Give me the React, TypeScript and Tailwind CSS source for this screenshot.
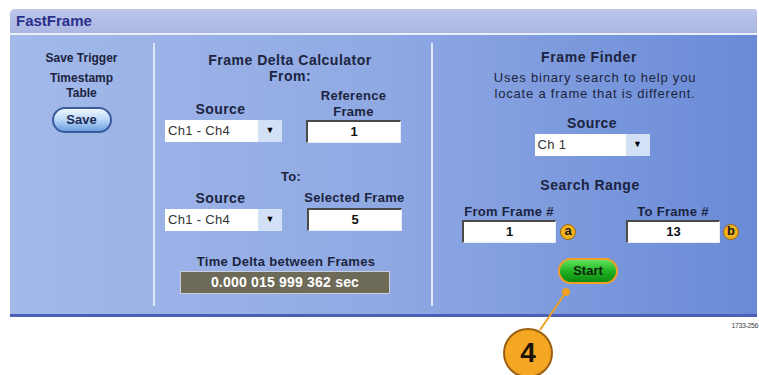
import React from "react";

const label = "font-bold text-[13px] leading-[16px] text-[#1c2440] tracking-[0.3px]";

const Dropdown = ({ value, w }: { value: string; w: string }) => (
  <div className={`flex h-[22px] ${w}`}>
    <div className="flex-1 bg-white flex items-center pl-[3px] text-[13px] text-[#333] tracking-[0.3px]">
      {value}
    </div>
    <div className="w-[24px] bg-[#d3e1f6] flex items-center justify-center text-[9px] text-black">
      ▼
    </div>
  </div>
);

const NumField = ({ value, w = "w-[95px]" }: { value: string; w?: string }) => (
  <div
    className={`h-[23px] ${w} bg-white border-t-2 border-l-2 border-[#4a4a4a] border-r border-b border-r-[#e8eef8] border-b-[#e8eef8] flex items-center justify-center font-bold text-[13px] text-[#111]`}
  >
    {value}
  </div>
);

const Badge = ({ ch }: { ch: string }) => (
  <div className="w-[16px] h-[16px] rounded-full bg-[#f2b21c] border border-[#9a6a10] flex items-center justify-center font-bold text-[13px] leading-none text-[#1a1a1a] pb-[2px]">
    {ch}
  </div>
);

const Divider = () => <div className="w-[2px] my-[8px] bg-[#dce7f8]" />;

const App = () => (
  <div className="relative w-[759px] h-[375px] bg-white overflow-hidden font-['Liberation_Sans',Arial,sans-serif]">
    {/* Panel */}
    <div className="ml-[10px] mt-[9px] w-[747px] rounded-tl-[5px] rounded-tr-[3px] overflow-hidden">
      {/* Title bar */}
      <div className="h-[26px] bg-gradient-to-b from-[#bcc6ea] to-[#aab6e2] flex items-center pl-[6px] border-b-2 border-[#e9effb]">
        <span className="font-bold text-[15px] text-[#29308c]">FastFrame</span>
      </div>

      {/* Body */}
      <div className="h-[282px] flex bg-gradient-to-r from-[#a3b9ea] via-[#8fa9e3] to-[#6a8ad7] border-b-[3px] border-[#4b5fb4]">
        {/* Left column */}
        <div className="w-[143px] flex flex-col items-center pt-[16px]">
          <div className="font-bold text-[12px] leading-[15px] text-[#1c2440]">Save Trigger</div>
          <div className="font-bold text-[12px] leading-[15px] text-[#1c2440] mt-[5px] text-center">
            Timestamp
            <br />
            Table
          </div>
          <button className="mt-[6px] w-[60px] h-[26px] rounded-full bg-gradient-to-b from-[#eef7ff] via-[#b8d6f6] to-[#6e9fe0] border-2 border-[#3b5b9c] font-bold text-[13px] text-[#1c2a55]">
            Save
          </button>
        </div>

        <Divider />

        {/* Middle column */}
        <div className="w-[276px] flex flex-col pt-[17px]">
          <div className="text-center font-bold text-[14px] leading-[16px] text-[#1c2440] tracking-[0.5px] pr-[6px]">
            Frame Delta Calculator
            <br />
            From:
          </div>

          <div className="flex gap-[23px] pl-[10px] mt-[4px]">
            <div className="w-[117px] flex flex-col">
              <div className="h-[32px] flex items-end justify-center pb-[3px]">
                <span className="font-bold text-[14px] leading-[16px] text-[#1c2440] tracking-[0.4px] pr-[6px]">Source</span>
              </div>
              <Dropdown value="Ch1 - Ch4" w="w-[117px]" />
            </div>
            <div className="w-[97px] flex flex-col items-center">
              <div className={`${label} text-center h-[32px]`}>
                Reference
                <br />
                Frame
              </div>
              <NumField value="1" />
            </div>
          </div>

          <div className={`${label} text-center mt-[26px] pr-[4px]`}>To:</div>

          <div className="flex gap-[23px] pl-[10px] mt-[5px]">
            <div className="w-[117px] flex flex-col">
              <div className="h-[16px] flex items-end justify-center">
                <span className="font-bold text-[14px] leading-[16px] text-[#1c2440] tracking-[0.4px] pr-[6px]">Source</span>
              </div>
              <Dropdown value="Ch1 - Ch4" w="w-[117px] mt-[3px]" />
            </div>
            <div className="w-[99px] flex flex-col items-center">
              <div className={`${label} text-center h-[18px] whitespace-nowrap`}>Selected Frame</div>
              <NumField value="5" />
            </div>
          </div>

          <div className={`${label} text-center mt-[23px] pr-[14px]`}>Time Delta between Frames</div>
          <div className="mx-auto mr-[41px] mt-[1px] w-[210px] h-[23px] bg-[#6e6a58] border border-[#c9cfdc] flex items-center justify-center font-bold text-[14px] text-white tracking-[0.2px]">
            0.000 015 999 362 sec
          </div>
        </div>

        <Divider />

        {/* Right column */}
        <div className="flex-1 flex flex-col pt-[14px]">
          <div className="text-center font-bold text-[14px] leading-[16px] text-[#1c2440] tracking-[0.6px] pr-[12px]">
            Frame Finder
          </div>
          <div className="mt-[5px] text-center text-[13px] leading-[16px] text-[#1c2440] tracking-[0.8px]">
            Uses binary search to help you
            <br />
            locate a frame that is different.
          </div>
          <div className="mt-[13px] text-center font-bold text-[14px] leading-[16px] text-[#1c2440] tracking-[0.4px] pr-[6px]">
            Source
          </div>
          <div className="flex justify-center mt-[3px] pr-[6px]">
            <Dropdown value="Ch 1" w="w-[115px]" />
          </div>
          <div className="mt-[21px] text-center font-bold text-[14px] leading-[16px] text-[#1c2440] tracking-[0.5px] pr-[10px]">
            Search Range
          </div>

          <div className="flex pl-[29px] gap-[50px] mt-[11px]">
            <div className="flex flex-col">
              <div className={`${label} text-center w-[94px]`}>From Frame #</div>
              <div className="flex items-center gap-[4px]">
                <NumField value="1" w="w-[94px]" />
                <Badge ch="a" />
              </div>
            </div>
            <div className="flex flex-col">
              <div className={`${label} text-center w-[94px]`}>To Frame #</div>
              <div className="flex items-center gap-[3px]">
                <NumField value="13" w="w-[94px]" />
                <Badge ch="b" />
              </div>
            </div>
          </div>

          <div className="flex justify-center mt-[15px] pr-[14px]">
            <button className="w-[60px] h-[26px] rounded-full border-2 border-[#f2a024] bg-gradient-to-b from-[#5ee45a] via-[#22b422] to-[#0c8a10] font-bold text-[13px] text-[#10240e]">
              Start
            </button>
          </div>
        </div>
      </div>
    </div>

    {/* Figure number */}
    <div className="absolute right-[1px] top-[321px] text-[7px] text-[#444] tracking-[-0.4px]">1733-256</div>

    {/* Callout */}
    <svg className="absolute left-0 top-0 pointer-events-none" width="759" height="375">
      <line x1="566" y1="292" x2="540" y2="330" stroke="#f0a020" strokeWidth="2" />
      <circle cx="566" cy="292" r="4" fill="#f0a020" />
    </svg>
    <div className="absolute left-[503px] top-[328px] w-[50px] h-[50px] rounded-full bg-[#f5a623] border-2 border-[#9a5f10] flex items-center justify-center font-bold text-[28px] text-[#1a1206]">
      4
    </div>
  </div>
);

export default App;
